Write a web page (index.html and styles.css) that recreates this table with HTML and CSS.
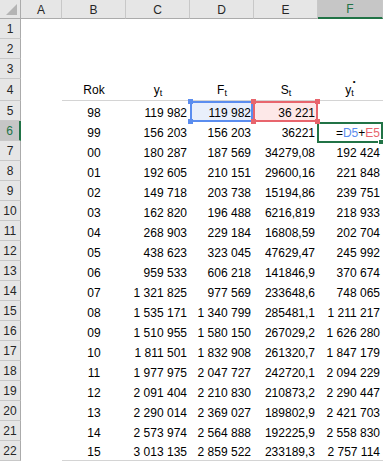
FILE: index.html
```html
<!DOCTYPE html>
<html>
<head>
<meta charset="utf-8">
<link rel="stylesheet" href="styles.css">
</head>
<body>
<div class="sheet">
  <div class="hd corner"><span class="tri"></span></div>
  <div class="hd col">A</div><div class="hd col">B</div><div class="hd col">C</div><div class="hd col">D</div><div class="hd col">E</div><div class="hd col active-col">F</div>

  <div class="hd row">1</div><div class="c"></div><div class="c"></div><div class="c"></div><div class="c"></div><div class="c"></div><div class="c"></div>
  <div class="hd row">2</div><div class="c"></div><div class="c"></div><div class="c"></div><div class="c"></div><div class="c"></div><div class="c"></div>
  <div class="hd row">3</div><div class="c"></div><div class="c"></div><div class="c"></div><div class="c"></div><div class="c"></div><div class="c"></div>

  <div class="hd row r4">4</div><div class="c"></div>
  <div class="c ctr head"><span>Rok</span></div>
  <div class="c ctr head"><span>y<sub>t</sub></span></div>
  <div class="c ctr head"><span>F<sub>t</sub></span></div>
  <div class="c ctr head"><span>S<sub>t</sub></span></div>
  <div class="c ctr head ystar"><span>y<sub>t</sub><sup>•</sup></span></div>

  <div class="hd row">5</div><div class="c"></div><div class="c ctr">98</div><div class="c num">119 982</div>
  <div class="c num ref blue">119 982<i class="h tl"></i><i class="h bl"></i></div>
  <div class="c num ref red">36 221<i class="h tl"></i><i class="h tr"></i><i class="h bl"></i><i class="h br"></i></div>
  <div class="c num"></div>

  <div class="hd row active-row">6</div><div class="c"></div><div class="c ctr">99</div><div class="c num">156 203</div><div class="c num">156 203</div><div class="c num">36221</div>
  <div class="c num edit"><span>=<span class="fb">D5</span>+<span class="fr">E5</span></span><i class="fill"></i></div>

  <div class="hd row">7</div><div class="c"></div><div class="c ctr">00</div><div class="c num">180 287</div><div class="c num">187 569</div><div class="c num">34279,08</div><div class="c num">192 424</div>
  <div class="hd row">8</div><div class="c"></div><div class="c ctr">01</div><div class="c num">192 605</div><div class="c num">210 151</div><div class="c num">29600,16</div><div class="c num">221 848</div>
  <div class="hd row">9</div><div class="c"></div><div class="c ctr">02</div><div class="c num">149 718</div><div class="c num">203 738</div><div class="c num">15194,86</div><div class="c num">239 751</div>
  <div class="hd row">10</div><div class="c"></div><div class="c ctr">03</div><div class="c num">162 820</div><div class="c num">196 488</div><div class="c num">6216,819</div><div class="c num">218 933</div>
  <div class="hd row">11</div><div class="c"></div><div class="c ctr">04</div><div class="c num">268 903</div><div class="c num">229 184</div><div class="c num">16808,59</div><div class="c num">202 704</div>
  <div class="hd row">12</div><div class="c"></div><div class="c ctr">05</div><div class="c num">438 623</div><div class="c num">323 045</div><div class="c num">47629,47</div><div class="c num">245 992</div>
  <div class="hd row">13</div><div class="c"></div><div class="c ctr">06</div><div class="c num">959 533</div><div class="c num">606 218</div><div class="c num">141846,9</div><div class="c num">370 674</div>
  <div class="hd row">14</div><div class="c"></div><div class="c ctr">07</div><div class="c num">1 321 825</div><div class="c num">977 569</div><div class="c num">233648,6</div><div class="c num">748 065</div>
  <div class="hd row">15</div><div class="c"></div><div class="c ctr">08</div><div class="c num">1 535 171</div><div class="c num">1 340 799</div><div class="c num">285481,1</div><div class="c num">1 211 217</div>
  <div class="hd row">16</div><div class="c"></div><div class="c ctr">09</div><div class="c num">1 510 955</div><div class="c num">1 580 150</div><div class="c num">267029,2</div><div class="c num">1 626 280</div>
  <div class="hd row">17</div><div class="c"></div><div class="c ctr">10</div><div class="c num">1 811 501</div><div class="c num">1 832 908</div><div class="c num">261320,7</div><div class="c num">1 847 179</div>
  <div class="hd row">18</div><div class="c"></div><div class="c ctr">11</div><div class="c num">1 977 975</div><div class="c num">2 047 727</div><div class="c num">242720,1</div><div class="c num">2 094 229</div>
  <div class="hd row">19</div><div class="c"></div><div class="c ctr">12</div><div class="c num">2 091 404</div><div class="c num">2 210 830</div><div class="c num">210873,2</div><div class="c num">2 290 447</div>
  <div class="hd row">20</div><div class="c"></div><div class="c ctr">13</div><div class="c num">2 290 014</div><div class="c num">2 369 027</div><div class="c num">189802,9</div><div class="c num">2 421 703</div>
  <div class="hd row">21</div><div class="c"></div><div class="c ctr">14</div><div class="c num">2 573 974</div><div class="c num">2 564 888</div><div class="c num">192225,9</div><div class="c num">2 558 830</div>
  <div class="hd row last">22</div><div class="c"></div><div class="c ctr lastline">15</div><div class="c num lastline">3 013 135</div><div class="c num lastline">2 859 522</div><div class="c num lastline">233189,3</div><div class="c num lastline">2 757 114</div>
</div>
</body>
</html>
```

FILE: styles.css
```css
* { box-sizing: border-box; }
html, body { margin: 0; padding: 0; background: #ffffff; }
body {
  font-family: "Liberation Sans", Arial, sans-serif;
  font-size: 12px;
  color: #000;
}
.sheet {
  display: grid;
  grid-template-columns: 21px 41px 64px 64px 64px 64px 65px;
  grid-template-rows: 19px repeat(3, 20px) 22px repeat(18, 20px);
  width: 385px;
  height: 463px;
  overflow: hidden;
}
.hd {
  background: #e6e6e6;
  color: #262626;
  display: flex;
  align-items: center;
  justify-content: center;
  font-size: 12px;
}
.corner {
  position: relative;
  border-right: 1px solid #ababab;
  border-bottom: 1px solid #ababab;
}
.tri {
  position: absolute;
  right: 3px;
  bottom: 3px;
  width: 0;
  height: 0;
  border-left: 11px solid transparent;
  border-bottom: 11px solid #b4b4b4;
}
.col {
  border-right: 1px solid #c8c8c8;
  border-bottom: 1px solid #ababab;
  padding-top: 1px;
}
.row {
  border-right: 1px solid #ababab;
  border-bottom: 1px solid #c8c8c8;
}
.active-col {
  background: #c6c6c6;
  color: #217346;
  border-bottom: 2px solid #217346;
}
.active-row {
  background: #c6c6c6;
  color: #217346;
  border-right: 2px solid #217346;
}
.c {
  display: flex;
  align-items: flex-end;
  line-height: 16px;
  white-space: nowrap;
  position: relative;
}
.num { justify-content: flex-end; padding-right: 3px; }
.ctr { justify-content: center; }
.head { border-bottom: 1px solid #d4d4d4; padding-bottom: 2px; }
.head sub { font-size: 9px; vertical-align: -2px; line-height: 0; }
.ystar sup { font-size: 8px; vertical-align: 10px; line-height: 0; margin-left: -1px; }
.lastline { border-bottom: 1px solid #d4d4d4; }
.last { border-bottom: 1px solid #c8c8c8; }

.ref::before {
  content: "";
  position: absolute;
  left: 0;
  top: 0;
  right: 0;
  bottom: -1px;
  border: 2px solid;
  pointer-events: none;
}
.blue { background: #e9effb; }
.blue::before { border-color: #5b8def; right: 1px; }
.red { background: #fde8e8; }
.red::before { border-color: #e8656d; left: -1px; }
.h {
  position: absolute;
  width: 5px;
  height: 5px;
  z-index: 2;
}
.blue .h { background: #5b8def; }
.red .h { background: #e8656d; }
.h.tl { left: -2px; top: -2px; }
.h.tr { right: -2px; top: -2px; }
.h.bl { left: -2px; bottom: -3px; }
.h.br { right: -2px; bottom: -3px; }
.red .h.tl, .red .h.bl { left: -3px; }

.edit::before {
  content: "";
  position: absolute;
  left: -1px;
  top: 1px;
  right: 0;
  bottom: -2px;
  border: 2px solid #217346;
}
.fb { color: #5b8def; }
.fr { color: #e8656d; }
.fill {
  position: absolute;
  right: -1px;
  bottom: -4px;
  width: 6px;
  height: 6px;
  background: #217346;
  border: 1px solid #fff;
  z-index: 2;
}
```
